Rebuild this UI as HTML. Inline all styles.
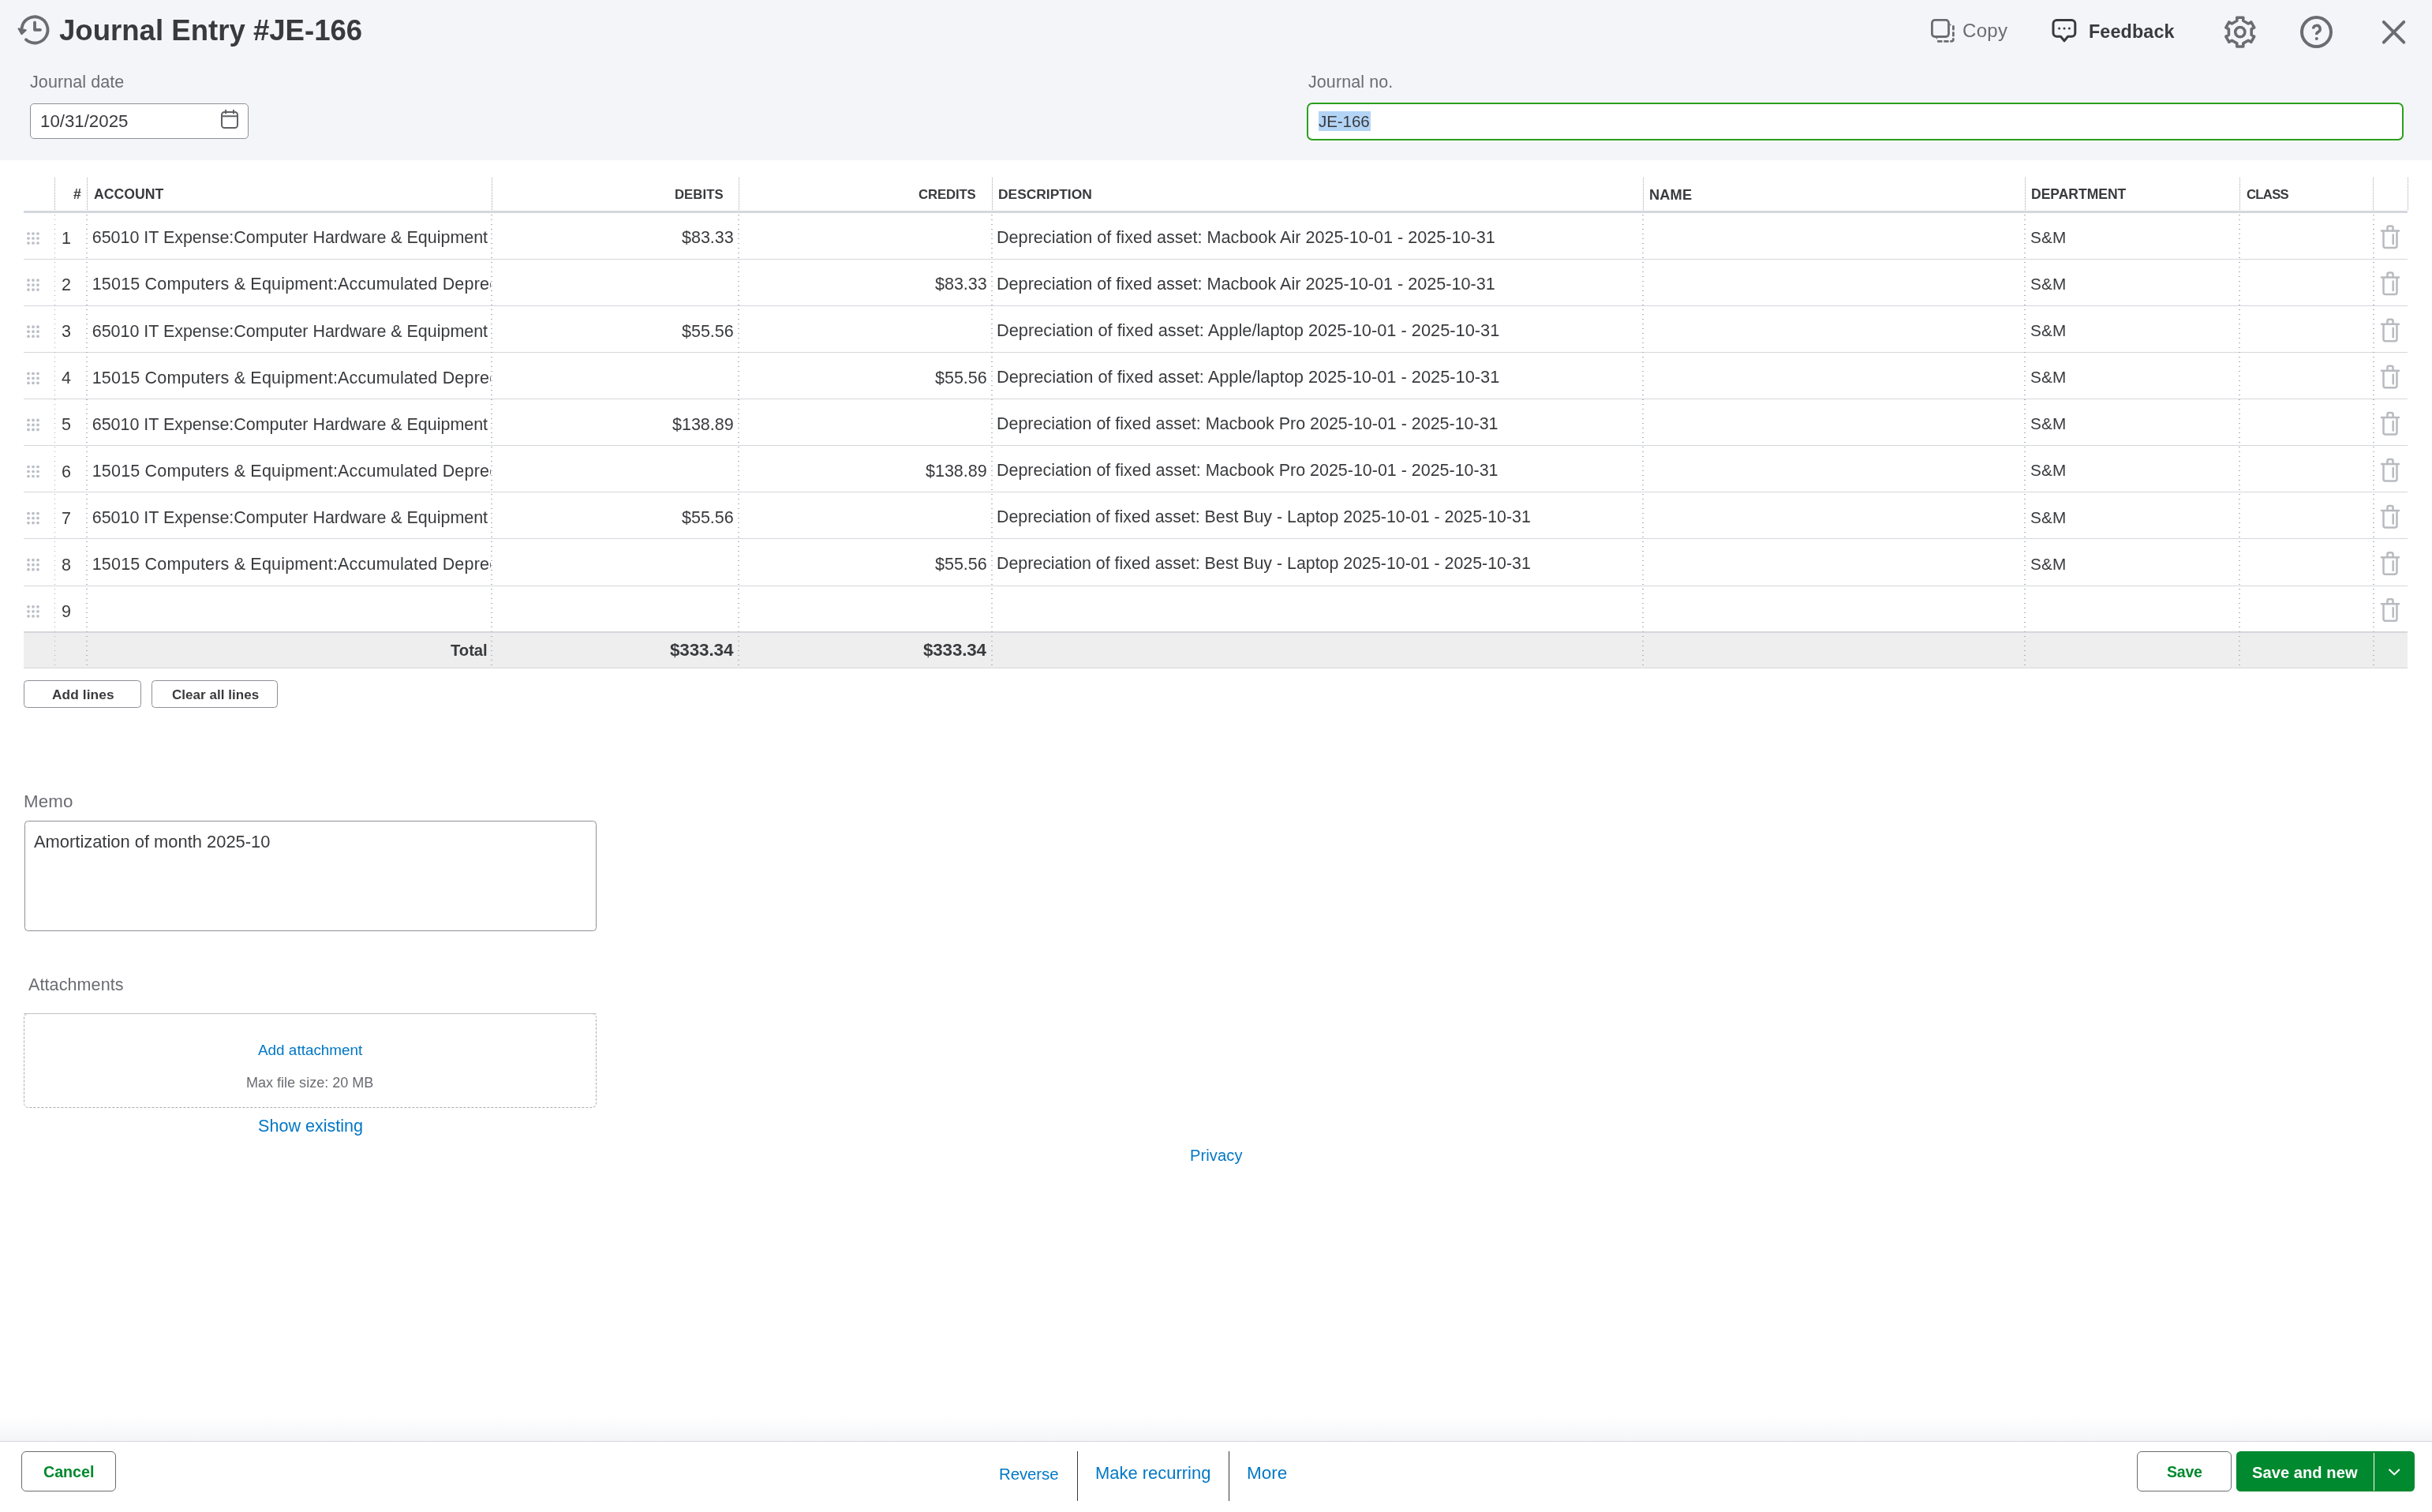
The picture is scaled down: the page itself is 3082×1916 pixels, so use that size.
<!DOCTYPE html>
<html><head><meta charset="utf-8"><title>Journal Entry</title>
<style>
html,body{margin:0;padding:0;}
body{width:3082px;height:1916px;position:relative;overflow:hidden;background:#fff;font-family:'Liberation Sans', sans-serif;}
.t{position:absolute;line-height:1;white-space:nowrap;will-change:transform;}
.b{position:absolute;}
svg.ov{position:absolute;left:0;top:0;}
</style></head><body>
<div class="b" style="left:0.00px;top:0.00px;width:3082.00px;height:202.50px;background:#f4f5f8;"></div>
<div class="t" style="left:75.10px;top:21.03px;font-size:36.59px;font-weight:bold;color:#393a3d;letter-spacing:-0.004px;">Journal Entry #JE-166</div>
<div class="t" style="left:2487.00px;top:27.24px;font-size:24.05px;font-weight:normal;color:#6b6c72;letter-spacing:0.296px;">Copy</div>
<div class="t" style="left:2646.50px;top:29.45px;font-size:23.33px;font-weight:bold;color:#393a3d;letter-spacing:0.122px;">Feedback</div>
<div class="t" style="left:38.40px;top:94.20px;font-size:21.5px;font-weight:normal;color:#6b6c72;letter-spacing:0.084px;">Journal date</div>
<div class="b" style="left:38.00px;top:131.00px;width:277.00px;height:45.00px;background:#fff;border:1.4px solid #8d9096;border-radius:5px;box-sizing:border-box;"></div>
<div class="t" style="left:51.00px;top:142.76px;font-size:22.26px;font-weight:normal;color:#393a3d;letter-spacing:0.002px;">10/31/2025</div>
<div class="t" style="left:1658.20px;top:94.23px;font-size:21.47px;font-weight:normal;color:#6b6c72;letter-spacing:0.094px;">Journal no.</div>
<div class="b" style="left:1656.40px;top:129.50px;width:1390.00px;height:48.00px;background:#fff;border:2.5px solid #2ca01c;border-radius:7px;box-sizing:border-box;"></div>
<div class="b" style="left:1671.00px;top:141.00px;width:66.00px;height:25.00px;background:#b3d4f5;"></div>
<div class="t" style="left:1671.00px;top:144.40px;font-size:20.55px;font-weight:normal;color:#393a3d;letter-spacing:-0.075px;">JE-166</div>
<div class="b" style="left:69.00px;top:225.00px;width:1.00px;height:42.00px;background:repeating-linear-gradient(to bottom,#a6a9ae 0 1px,transparent 1px 2px);"></div>
<div class="b" style="left:109.50px;top:225.00px;width:1.00px;height:42.00px;background:repeating-linear-gradient(to bottom,#a6a9ae 0 1px,transparent 1px 2px);"></div>
<div class="b" style="left:622.50px;top:225.00px;width:1.00px;height:42.00px;background:repeating-linear-gradient(to bottom,#a6a9ae 0 1px,transparent 1px 2px);"></div>
<div class="b" style="left:935.50px;top:225.00px;width:1.00px;height:42.00px;background:repeating-linear-gradient(to bottom,#a6a9ae 0 1px,transparent 1px 2px);"></div>
<div class="b" style="left:1256.50px;top:225.00px;width:1.00px;height:42.00px;background:repeating-linear-gradient(to bottom,#a6a9ae 0 1px,transparent 1px 2px);"></div>
<div class="b" style="left:2081.50px;top:225.00px;width:1.00px;height:42.00px;background:repeating-linear-gradient(to bottom,#a6a9ae 0 1px,transparent 1px 2px);"></div>
<div class="b" style="left:2565.50px;top:225.00px;width:1.00px;height:42.00px;background:repeating-linear-gradient(to bottom,#a6a9ae 0 1px,transparent 1px 2px);"></div>
<div class="b" style="left:2837.50px;top:225.00px;width:1.00px;height:42.00px;background:repeating-linear-gradient(to bottom,#a6a9ae 0 1px,transparent 1px 2px);"></div>
<div class="b" style="left:3007.00px;top:225.00px;width:1.00px;height:42.00px;background:repeating-linear-gradient(to bottom,#a6a9ae 0 1px,transparent 1px 2px);"></div>
<div class="b" style="left:3050.50px;top:225.00px;width:1.00px;height:42.00px;background:repeating-linear-gradient(to bottom,#a6a9ae 0 1px,transparent 1px 2px);"></div>
<div class="b" style="left:30.00px;top:267.00px;width:3021.00px;height:3.00px;background:#d4d7dc;"></div>
<div class="t" style="left:92.70px;top:238.10px;font-size:17.6px;font-weight:bold;color:#393a3d;letter-spacing:0.000px;">#</div>
<div class="t" style="left:118.90px;top:238.07px;font-size:17.64px;font-weight:bold;color:#393a3d;letter-spacing:0.008px;">ACCOUNT</div>
<div class="t" style="left:855.00px;top:238.85px;font-size:16.72px;font-weight:bold;color:#393a3d;letter-spacing:0.058px;">DEBITS</div>
<div class="t" style="left:1164.00px;top:238.85px;font-size:16.72px;font-weight:bold;color:#393a3d;letter-spacing:-0.112px;">CREDITS</div>
<div class="t" style="left:1265.00px;top:238.27px;font-size:17.4px;font-weight:bold;color:#393a3d;letter-spacing:-0.009px;">DESCRIPTION</div>
<div class="t" style="left:2090.00px;top:237.57px;font-size:18.23px;font-weight:bold;color:#393a3d;letter-spacing:0.137px;">NAME</div>
<div class="t" style="left:2573.60px;top:238.17px;font-size:17.52px;font-weight:bold;color:#393a3d;letter-spacing:-0.004px;">DEPARTMENT</div>
<div class="t" style="left:2846.80px;top:238.85px;font-size:16.72px;font-weight:bold;color:#393a3d;letter-spacing:-0.717px;">CLASS</div>
<div class="b" style="left:30.00px;top:327.80px;width:3021.00px;height:1.00px;background:#d4d7dc;"></div>
<div class="t" style="left:77.50px;top:292.00px;font-size:21.5px;font-weight:normal;color:#393a3d;">1</div>
<div class="t" style="left:117px;top:291.30px;width:505.00px;overflow:hidden;white-space:nowrap;font-size:21.5px;letter-spacing:-0.030px;color:#393a3d"><span style="margin-left:-0.30px">65010 IT Expense:Computer Hardware &amp; Equipment</span></div>
<div class="t" style="right:2152.00px;text-align:right;top:291.30px;font-size:21.5px;font-weight:normal;color:#393a3d;">$83.33</div>
<div class="t" style="left:1263.00px;top:290.22px;font-size:21.6px;font-weight:normal;color:#393a3d;letter-spacing:0.005px;">Depreciation of fixed asset: Macbook Air 2025-10-01 - 2025-10-31</div>
<div class="t" style="left:2573.00px;top:290.97px;font-size:20.71px;font-weight:normal;color:#393a3d;letter-spacing:0.191px;">S&amp;M</div>
<div class="b" style="left:30.00px;top:386.90px;width:3021.00px;height:1.00px;background:#d4d7dc;"></div>
<div class="t" style="left:77.50px;top:351.10px;font-size:21.5px;font-weight:normal;color:#393a3d;">2</div>
<div class="t" style="left:117px;top:350.40px;width:505.00px;overflow:hidden;white-space:nowrap;font-size:21.5px;letter-spacing:0.193px;color:#393a3d"><span style="margin-left:-0.30px">15015 Computers &amp; Equipment:Accumulated Depreciation</span></div>
<div class="t" style="right:1831.00px;text-align:right;top:350.40px;font-size:21.5px;font-weight:normal;color:#393a3d;">$83.33</div>
<div class="t" style="left:1263.00px;top:349.32px;font-size:21.6px;font-weight:normal;color:#393a3d;letter-spacing:0.005px;">Depreciation of fixed asset: Macbook Air 2025-10-01 - 2025-10-31</div>
<div class="t" style="left:2573.00px;top:350.07px;font-size:20.71px;font-weight:normal;color:#393a3d;letter-spacing:0.191px;">S&amp;M</div>
<div class="b" style="left:30.00px;top:446.00px;width:3021.00px;height:1.00px;background:#d4d7dc;"></div>
<div class="t" style="left:77.50px;top:410.20px;font-size:21.5px;font-weight:normal;color:#393a3d;">3</div>
<div class="t" style="left:117px;top:409.50px;width:505.00px;overflow:hidden;white-space:nowrap;font-size:21.5px;letter-spacing:-0.030px;color:#393a3d"><span style="margin-left:-0.30px">65010 IT Expense:Computer Hardware &amp; Equipment</span></div>
<div class="t" style="right:2152.00px;text-align:right;top:409.50px;font-size:21.5px;font-weight:normal;color:#393a3d;">$55.56</div>
<div class="t" style="left:1263.00px;top:408.23px;font-size:21.82px;font-weight:normal;color:#393a3d;letter-spacing:-0.009px;">Depreciation of fixed asset: Apple/laptop 2025-10-01 - 2025-10-31</div>
<div class="t" style="left:2573.00px;top:409.17px;font-size:20.71px;font-weight:normal;color:#393a3d;letter-spacing:0.191px;">S&amp;M</div>
<div class="b" style="left:30.00px;top:505.10px;width:3021.00px;height:1.00px;background:#d4d7dc;"></div>
<div class="t" style="left:77.50px;top:469.30px;font-size:21.5px;font-weight:normal;color:#393a3d;">4</div>
<div class="t" style="left:117px;top:468.60px;width:505.00px;overflow:hidden;white-space:nowrap;font-size:21.5px;letter-spacing:0.193px;color:#393a3d"><span style="margin-left:-0.30px">15015 Computers &amp; Equipment:Accumulated Depreciation</span></div>
<div class="t" style="right:1831.00px;text-align:right;top:468.60px;font-size:21.5px;font-weight:normal;color:#393a3d;">$55.56</div>
<div class="t" style="left:1263.00px;top:467.33px;font-size:21.82px;font-weight:normal;color:#393a3d;letter-spacing:-0.009px;">Depreciation of fixed asset: Apple/laptop 2025-10-01 - 2025-10-31</div>
<div class="t" style="left:2573.00px;top:468.27px;font-size:20.71px;font-weight:normal;color:#393a3d;letter-spacing:0.191px;">S&amp;M</div>
<div class="b" style="left:30.00px;top:564.20px;width:3021.00px;height:1.00px;background:#d4d7dc;"></div>
<div class="t" style="left:77.50px;top:528.40px;font-size:21.5px;font-weight:normal;color:#393a3d;">5</div>
<div class="t" style="left:117px;top:527.70px;width:505.00px;overflow:hidden;white-space:nowrap;font-size:21.5px;letter-spacing:-0.030px;color:#393a3d"><span style="margin-left:-0.30px">65010 IT Expense:Computer Hardware &amp; Equipment</span></div>
<div class="t" style="right:2152.00px;text-align:right;top:527.70px;font-size:21.5px;font-weight:normal;color:#393a3d;">$138.89</div>
<div class="t" style="left:1263.00px;top:526.74px;font-size:21.45px;font-weight:normal;color:#393a3d;letter-spacing:0.006px;">Depreciation of fixed asset: Macbook Pro 2025-10-01 - 2025-10-31</div>
<div class="t" style="left:2573.00px;top:527.37px;font-size:20.71px;font-weight:normal;color:#393a3d;letter-spacing:0.191px;">S&amp;M</div>
<div class="b" style="left:30.00px;top:623.30px;width:3021.00px;height:1.00px;background:#d4d7dc;"></div>
<div class="t" style="left:77.50px;top:587.50px;font-size:21.5px;font-weight:normal;color:#393a3d;">6</div>
<div class="t" style="left:117px;top:586.80px;width:505.00px;overflow:hidden;white-space:nowrap;font-size:21.5px;letter-spacing:0.193px;color:#393a3d"><span style="margin-left:-0.30px">15015 Computers &amp; Equipment:Accumulated Depreciation</span></div>
<div class="t" style="right:1831.00px;text-align:right;top:586.80px;font-size:21.5px;font-weight:normal;color:#393a3d;">$138.89</div>
<div class="t" style="left:1263.00px;top:585.84px;font-size:21.45px;font-weight:normal;color:#393a3d;letter-spacing:0.006px;">Depreciation of fixed asset: Macbook Pro 2025-10-01 - 2025-10-31</div>
<div class="t" style="left:2573.00px;top:586.47px;font-size:20.71px;font-weight:normal;color:#393a3d;letter-spacing:0.191px;">S&amp;M</div>
<div class="b" style="left:30.00px;top:682.40px;width:3021.00px;height:1.00px;background:#d4d7dc;"></div>
<div class="t" style="left:77.50px;top:646.60px;font-size:21.5px;font-weight:normal;color:#393a3d;">7</div>
<div class="t" style="left:117px;top:645.90px;width:505.00px;overflow:hidden;white-space:nowrap;font-size:21.5px;letter-spacing:-0.030px;color:#393a3d"><span style="margin-left:-0.30px">65010 IT Expense:Computer Hardware &amp; Equipment</span></div>
<div class="t" style="right:2152.00px;text-align:right;top:645.90px;font-size:21.5px;font-weight:normal;color:#393a3d;">$55.56</div>
<div class="t" style="left:1263.00px;top:645.02px;font-size:21.36px;font-weight:normal;color:#393a3d;letter-spacing:-0.000px;">Depreciation of fixed asset: Best Buy - Laptop 2025-10-01 - 2025-10-31</div>
<div class="t" style="left:2573.00px;top:645.57px;font-size:20.71px;font-weight:normal;color:#393a3d;letter-spacing:0.191px;">S&amp;M</div>
<div class="b" style="left:30.00px;top:741.50px;width:3021.00px;height:1.00px;background:#d4d7dc;"></div>
<div class="t" style="left:77.50px;top:705.70px;font-size:21.5px;font-weight:normal;color:#393a3d;">8</div>
<div class="t" style="left:117px;top:705.00px;width:505.00px;overflow:hidden;white-space:nowrap;font-size:21.5px;letter-spacing:0.193px;color:#393a3d"><span style="margin-left:-0.30px">15015 Computers &amp; Equipment:Accumulated Depreciation</span></div>
<div class="t" style="right:1831.00px;text-align:right;top:705.00px;font-size:21.5px;font-weight:normal;color:#393a3d;">$55.56</div>
<div class="t" style="left:1263.00px;top:704.12px;font-size:21.36px;font-weight:normal;color:#393a3d;letter-spacing:-0.000px;">Depreciation of fixed asset: Best Buy - Laptop 2025-10-01 - 2025-10-31</div>
<div class="t" style="left:2573.00px;top:704.67px;font-size:20.71px;font-weight:normal;color:#393a3d;letter-spacing:0.191px;">S&amp;M</div>
<div class="t" style="left:77.50px;top:764.80px;font-size:21.5px;font-weight:normal;color:#393a3d;">9</div>
<div class="b" style="left:30.00px;top:800.00px;width:3021.00px;height:2.00px;background:#d4d7dc;"></div>
<div class="b" style="left:30.00px;top:802.00px;width:3021.00px;height:44.00px;background:#eeeeee;"></div>
<div class="b" style="left:30.00px;top:846.00px;width:3021.00px;height:1.00px;background:#d4d7dc;"></div>
<div class="t" style="left:570.70px;top:814.42px;font-size:20.3px;font-weight:bold;color:#393a3d;letter-spacing:-0.051px;">Total</div>
<div class="t" style="left:849.00px;top:812.60px;font-size:22.45px;font-weight:bold;color:#393a3d;letter-spacing:-0.105px;">$333.34</div>
<div class="t" style="left:1170.00px;top:812.69px;font-size:22.34px;font-weight:bold;color:#393a3d;letter-spacing:-0.115px;">$333.34</div>
<div class="b" style="left:69.00px;top:272.00px;width:1.00px;height:574.00px;background:repeating-linear-gradient(to bottom,#a9acb1 0 1px,transparent 1px 6px);"></div>
<div class="b" style="left:109.00px;top:272.00px;width:2.00px;height:574.00px;background:repeating-linear-gradient(to bottom,#b0b3b8 0 1px,transparent 1px 6px);"></div>
<div class="b" style="left:622.00px;top:272.00px;width:2.00px;height:574.00px;background:repeating-linear-gradient(to bottom,#b0b3b8 0 1px,transparent 1px 6px);"></div>
<div class="b" style="left:935.00px;top:272.00px;width:2.00px;height:574.00px;background:repeating-linear-gradient(to bottom,#b0b3b8 0 1px,transparent 1px 6px);"></div>
<div class="b" style="left:1256.00px;top:272.00px;width:2.00px;height:574.00px;background:repeating-linear-gradient(to bottom,#b0b3b8 0 1px,transparent 1px 6px);"></div>
<div class="b" style="left:2081.00px;top:272.00px;width:2.00px;height:574.00px;background:repeating-linear-gradient(to bottom,#b0b3b8 0 1px,transparent 1px 6px);"></div>
<div class="b" style="left:2565.00px;top:272.00px;width:2.00px;height:574.00px;background:repeating-linear-gradient(to bottom,#b0b3b8 0 1px,transparent 1px 6px);"></div>
<div class="b" style="left:2837.00px;top:272.00px;width:2.00px;height:574.00px;background:repeating-linear-gradient(to bottom,#b0b3b8 0 1px,transparent 1px 6px);"></div>
<div class="b" style="left:3007.00px;top:272.00px;width:2.00px;height:574.00px;background:repeating-linear-gradient(to bottom,#b0b3b8 0 1px,transparent 1px 6px);"></div>
<div class="b" style="left:30.30px;top:862.30px;width:149.10px;height:35.20px;border:1.3px solid #8d9096;border-radius:4.5px;box-sizing:border-box;"></div>
<div class="t" style="left:66.00px;top:872.00px;font-size:17.25px;font-weight:bold;color:#393a3d;letter-spacing:0.108px;">Add lines</div>
<div class="b" style="left:192.30px;top:862.30px;width:160.20px;height:35.20px;border:1.3px solid #8d9096;border-radius:4.5px;box-sizing:border-box;"></div>
<div class="t" style="left:217.70px;top:872.22px;font-size:16.99px;font-weight:bold;color:#393a3d;letter-spacing:0.052px;">Clear all lines</div>
<div class="t" style="left:29.50px;top:1005.39px;font-size:22.34px;font-weight:normal;color:#6b6c72;letter-spacing:0.094px;">Memo</div>
<div class="b" style="left:30.50px;top:1040.40px;width:725.50px;height:140.10px;border:1.4px solid #8d9096;border-radius:4.5px;box-sizing:border-box;background:#fff;"></div>
<div class="t" style="left:43.30px;top:1056.06px;font-size:21.9px;font-weight:normal;color:#393a3d;letter-spacing:0.001px;">Amortization of month 2025-10</div>
<div class="t" style="left:36.20px;top:1237.67px;font-size:21.54px;font-weight:normal;color:#6b6c72;letter-spacing:0.089px;">Attachments</div>
<div class="b" style="left:29.90px;top:1284.40px;width:726.10px;height:120.00px;border:1.2px dashed #a9acb1;border-radius:6px;box-sizing:border-box;"></div>
<div class="b" style="left:29.90px;top:1284.00px;width:726.10px;height:1.20px;background:#bfc2c7;"></div>
<div class="t" style="left:326.50px;top:1322.30px;font-size:18.9px;font-weight:normal;color:#0077c5;letter-spacing:0.002px;">Add attachment</div>
<div class="t" style="left:311.70px;top:1363.10px;font-size:18.07px;font-weight:normal;color:#6b6c72;letter-spacing:-0.014px;">Max file size: 20 MB</div>
<div class="t" style="left:326.50px;top:1415.64px;font-size:21.57px;font-weight:normal;color:#0077c5;letter-spacing:0.004px;">Show existing</div>
<div class="t" style="left:1507.80px;top:1454.31px;font-size:20.07px;font-weight:normal;color:#0077c5;letter-spacing:0.110px;">Privacy</div>
<div class="b" style="left:0.00px;top:1794.00px;width:3082.00px;height:32.00px;background:linear-gradient(to bottom,rgba(244,245,248,0),rgba(244,245,248,1));"></div>
<div class="b" style="left:0.00px;top:1826.00px;width:3082.00px;height:1.00px;background:#d4d7dc;"></div>
<div class="b" style="left:0.00px;top:1827.00px;width:3082.00px;height:89.00px;background:#fff;"></div>
<div class="b" style="left:27.30px;top:1839.00px;width:119.40px;height:50.60px;border:1.5px solid #6b6c72;border-radius:6px;box-sizing:border-box;background:#fff;"></div>
<div class="t" style="left:54.80px;top:1855.91px;font-size:19.72px;font-weight:bold;color:#00892e;letter-spacing:-0.038px;">Cancel</div>
<div class="t" style="left:1265.80px;top:1857.51px;font-size:20.42px;font-weight:normal;color:#0077c5;letter-spacing:-0.073px;">Reverse</div>
<div class="b" style="left:1365.00px;top:1839.00px;width:1.30px;height:63.00px;background:#393a3d;"></div>
<div class="t" style="left:1388.40px;top:1856.24px;font-size:21.92px;font-weight:normal;color:#0077c5;letter-spacing:0.022px;">Make recurring</div>
<div class="b" style="left:1556.80px;top:1839.00px;width:1.30px;height:63.00px;background:#393a3d;"></div>
<div class="t" style="left:1580.00px;top:1855.78px;font-size:22.47px;font-weight:normal;color:#0077c5;letter-spacing:0.002px;">More</div>
<div class="b" style="left:2708.00px;top:1839.00px;width:119.60px;height:50.80px;border:1.5px solid #6b6c72;border-radius:6px;box-sizing:border-box;background:#fff;"></div>
<div class="t" style="left:2745.60px;top:1856.03px;font-size:19.57px;font-weight:bold;color:#00892e;letter-spacing:-0.236px;">Save</div>
<div class="b" style="left:2833.70px;top:1839.00px;width:226.10px;height:50.80px;background:#00892e;border-radius:5.5px;"></div>
<div class="b" style="left:3007.80px;top:1841.00px;width:1.20px;height:47.60px;background:#fff;"></div>
<div class="t" style="left:2854.40px;top:1855.58px;font-size:20.11px;font-weight:bold;color:#fff;letter-spacing:0.049px;">Save and new</div>
<svg class="ov" width="3082" height="1916" viewBox="0 0 3082 1916">
<g stroke="#6b6c72" stroke-width="3.8" fill="none" stroke-linecap="round" stroke-linejoin="round"><path d="M32.9 50.2 A16.55 16.55 0 1 0 27.6 35.5"/><path d="M44 28.5 V37.8 H51"/></g><path d="M23.5 36.3 L32.8 38.3 L27.4 43.2 Z" fill="#6b6c72" stroke="#6b6c72" stroke-width="2" stroke-linejoin="round"/>
<g stroke="#6b6c72" stroke-width="2.8" fill="none" stroke-linecap="round"><path d="M2475.4 33.5 V37.2 M2475.4 41.5 V45.2 M2475.4 49.5 Q2475.4 52.4 2472.5 52.4 M2468.4 52.4 H2464.5 M2460.3 52.4 H2456.2"/></g><path d="M2470.9 30 L2472.9 31.4 L2471.4 32.8 Z M2452.9 46.6 L2455.8 47.6 L2454.2 49.9 Z" fill="#6b6c72"/><rect x="2448.4" y="25.4" width="21.1" height="21.1" rx="3.7" stroke="#6b6c72" stroke-width="2.8" fill="#f4f5f8"/>
<path d="M2606.5 25.4 H2625.3 A4.5 4.5 0 0 1 2629.8 29.9 V41.8 A4.5 4.5 0 0 1 2625.3 46.3 H2620.5 L2616 51.8 L2611.5 46.3 H2606.5 A4.5 4.5 0 0 1 2602 41.8 V29.9 A4.5 4.5 0 0 1 2606.5 25.4 Z" stroke="#393a3d" stroke-width="3" fill="none" stroke-linejoin="round"/><g fill="#393a3d"><circle cx="2609.6" cy="35.9" r="1.5"/><circle cx="2616" cy="35.9" r="1.5"/><circle cx="2622.4" cy="35.9" r="1.5"/></g>
<path d="M2834.80 26.30 L2834.80 22.20 L2842.80 22.20 L2842.80 26.30 L2849.18 29.99 L2852.73 27.94 L2856.73 34.86 L2853.18 36.91 L2853.18 44.29 L2856.73 46.34 L2852.73 53.26 L2849.18 51.21 L2842.80 54.90 L2842.80 59.00 L2834.80 59.00 L2834.80 54.90 L2828.42 51.21 L2824.87 53.26 L2820.87 46.34 L2824.42 44.29 L2824.42 36.91 L2820.87 34.86 L2824.87 27.94 L2828.42 29.99 Z" stroke="#6b6c72" stroke-width="3.6" fill="none" stroke-linejoin="round"/><circle cx="2838.8" cy="40.6" r="6.1" stroke="#6b6c72" stroke-width="3.6" fill="none"/>
<circle cx="2935.5" cy="40.6" r="18.5" stroke="#6b6c72" stroke-width="4" fill="none"/><path d="M2931.6 36.6 A4.3 4.3 0 1 1 2937.6 40.6 Q2935.7 41.6 2935.7 44" stroke="#6b6c72" stroke-width="3.5" fill="none" stroke-linecap="butt" stroke-linejoin="round"/><circle cx="2935.8" cy="48.9" r="2.0" fill="#6b6c72"/>
<path d="M3020.8 27.8 L3046.3 53.6 M3046.3 27.8 L3020.8 53.6" stroke="#6b6c72" stroke-width="3.9" stroke-linecap="round"/>
<g stroke="#5f6065" stroke-width="2" fill="none" stroke-linecap="round"><rect x="281" y="142" width="20" height="20" rx="3.5"/><path d="M281 147.3 H301 M286 139.8 V143.5 M296 139.8 V143.5"/></g>
<circle cx="36" cy="296.00" r="1.85" fill="#babec5"/>
<circle cx="36" cy="302.00" r="1.85" fill="#babec5"/>
<circle cx="36" cy="308.00" r="1.85" fill="#babec5"/>
<circle cx="42" cy="296.00" r="1.85" fill="#babec5"/>
<circle cx="42" cy="302.00" r="1.85" fill="#babec5"/>
<circle cx="42" cy="308.00" r="1.85" fill="#babec5"/>
<circle cx="48" cy="296.00" r="1.85" fill="#babec5"/>
<circle cx="48" cy="302.00" r="1.85" fill="#babec5"/>
<circle cx="48" cy="308.00" r="1.85" fill="#babec5"/>
<g stroke="#b8bbc0" stroke-width="2.5" fill="none" stroke-linecap="round" stroke-linejoin="round"><path d="M3018 292.50 H3040"/><path d="M3025.5 292.50 V288.50 A2 2 0 0 1 3027.5 286.50 H3030.5 A2 2 0 0 1 3032.5 288.50 V292.50"/><path d="M3020.5 293.00 V311.50 A2.5 2.5 0 0 0 3023 314.00 H3035 A2.5 2.5 0 0 0 3037.5 311.50 V293.00"/><path d="M3032.7 297.50 V309.00"/></g>
<circle cx="36" cy="355.10" r="1.85" fill="#babec5"/>
<circle cx="36" cy="361.10" r="1.85" fill="#babec5"/>
<circle cx="36" cy="367.10" r="1.85" fill="#babec5"/>
<circle cx="42" cy="355.10" r="1.85" fill="#babec5"/>
<circle cx="42" cy="361.10" r="1.85" fill="#babec5"/>
<circle cx="42" cy="367.10" r="1.85" fill="#babec5"/>
<circle cx="48" cy="355.10" r="1.85" fill="#babec5"/>
<circle cx="48" cy="361.10" r="1.85" fill="#babec5"/>
<circle cx="48" cy="367.10" r="1.85" fill="#babec5"/>
<g stroke="#b8bbc0" stroke-width="2.5" fill="none" stroke-linecap="round" stroke-linejoin="round"><path d="M3018 351.60 H3040"/><path d="M3025.5 351.60 V347.60 A2 2 0 0 1 3027.5 345.60 H3030.5 A2 2 0 0 1 3032.5 347.60 V351.60"/><path d="M3020.5 352.10 V370.60 A2.5 2.5 0 0 0 3023 373.10 H3035 A2.5 2.5 0 0 0 3037.5 370.60 V352.10"/><path d="M3032.7 356.60 V368.10"/></g>
<circle cx="36" cy="414.20" r="1.85" fill="#babec5"/>
<circle cx="36" cy="420.20" r="1.85" fill="#babec5"/>
<circle cx="36" cy="426.20" r="1.85" fill="#babec5"/>
<circle cx="42" cy="414.20" r="1.85" fill="#babec5"/>
<circle cx="42" cy="420.20" r="1.85" fill="#babec5"/>
<circle cx="42" cy="426.20" r="1.85" fill="#babec5"/>
<circle cx="48" cy="414.20" r="1.85" fill="#babec5"/>
<circle cx="48" cy="420.20" r="1.85" fill="#babec5"/>
<circle cx="48" cy="426.20" r="1.85" fill="#babec5"/>
<g stroke="#b8bbc0" stroke-width="2.5" fill="none" stroke-linecap="round" stroke-linejoin="round"><path d="M3018 410.70 H3040"/><path d="M3025.5 410.70 V406.70 A2 2 0 0 1 3027.5 404.70 H3030.5 A2 2 0 0 1 3032.5 406.70 V410.70"/><path d="M3020.5 411.20 V429.70 A2.5 2.5 0 0 0 3023 432.20 H3035 A2.5 2.5 0 0 0 3037.5 429.70 V411.20"/><path d="M3032.7 415.70 V427.20"/></g>
<circle cx="36" cy="473.30" r="1.85" fill="#babec5"/>
<circle cx="36" cy="479.30" r="1.85" fill="#babec5"/>
<circle cx="36" cy="485.30" r="1.85" fill="#babec5"/>
<circle cx="42" cy="473.30" r="1.85" fill="#babec5"/>
<circle cx="42" cy="479.30" r="1.85" fill="#babec5"/>
<circle cx="42" cy="485.30" r="1.85" fill="#babec5"/>
<circle cx="48" cy="473.30" r="1.85" fill="#babec5"/>
<circle cx="48" cy="479.30" r="1.85" fill="#babec5"/>
<circle cx="48" cy="485.30" r="1.85" fill="#babec5"/>
<g stroke="#b8bbc0" stroke-width="2.5" fill="none" stroke-linecap="round" stroke-linejoin="round"><path d="M3018 469.80 H3040"/><path d="M3025.5 469.80 V465.80 A2 2 0 0 1 3027.5 463.80 H3030.5 A2 2 0 0 1 3032.5 465.80 V469.80"/><path d="M3020.5 470.30 V488.80 A2.5 2.5 0 0 0 3023 491.30 H3035 A2.5 2.5 0 0 0 3037.5 488.80 V470.30"/><path d="M3032.7 474.80 V486.30"/></g>
<circle cx="36" cy="532.40" r="1.85" fill="#babec5"/>
<circle cx="36" cy="538.40" r="1.85" fill="#babec5"/>
<circle cx="36" cy="544.40" r="1.85" fill="#babec5"/>
<circle cx="42" cy="532.40" r="1.85" fill="#babec5"/>
<circle cx="42" cy="538.40" r="1.85" fill="#babec5"/>
<circle cx="42" cy="544.40" r="1.85" fill="#babec5"/>
<circle cx="48" cy="532.40" r="1.85" fill="#babec5"/>
<circle cx="48" cy="538.40" r="1.85" fill="#babec5"/>
<circle cx="48" cy="544.40" r="1.85" fill="#babec5"/>
<g stroke="#b8bbc0" stroke-width="2.5" fill="none" stroke-linecap="round" stroke-linejoin="round"><path d="M3018 528.90 H3040"/><path d="M3025.5 528.90 V524.90 A2 2 0 0 1 3027.5 522.90 H3030.5 A2 2 0 0 1 3032.5 524.90 V528.90"/><path d="M3020.5 529.40 V547.90 A2.5 2.5 0 0 0 3023 550.40 H3035 A2.5 2.5 0 0 0 3037.5 547.90 V529.40"/><path d="M3032.7 533.90 V545.40"/></g>
<circle cx="36" cy="591.50" r="1.85" fill="#babec5"/>
<circle cx="36" cy="597.50" r="1.85" fill="#babec5"/>
<circle cx="36" cy="603.50" r="1.85" fill="#babec5"/>
<circle cx="42" cy="591.50" r="1.85" fill="#babec5"/>
<circle cx="42" cy="597.50" r="1.85" fill="#babec5"/>
<circle cx="42" cy="603.50" r="1.85" fill="#babec5"/>
<circle cx="48" cy="591.50" r="1.85" fill="#babec5"/>
<circle cx="48" cy="597.50" r="1.85" fill="#babec5"/>
<circle cx="48" cy="603.50" r="1.85" fill="#babec5"/>
<g stroke="#b8bbc0" stroke-width="2.5" fill="none" stroke-linecap="round" stroke-linejoin="round"><path d="M3018 588.00 H3040"/><path d="M3025.5 588.00 V584.00 A2 2 0 0 1 3027.5 582.00 H3030.5 A2 2 0 0 1 3032.5 584.00 V588.00"/><path d="M3020.5 588.50 V607.00 A2.5 2.5 0 0 0 3023 609.50 H3035 A2.5 2.5 0 0 0 3037.5 607.00 V588.50"/><path d="M3032.7 593.00 V604.50"/></g>
<circle cx="36" cy="650.60" r="1.85" fill="#babec5"/>
<circle cx="36" cy="656.60" r="1.85" fill="#babec5"/>
<circle cx="36" cy="662.60" r="1.85" fill="#babec5"/>
<circle cx="42" cy="650.60" r="1.85" fill="#babec5"/>
<circle cx="42" cy="656.60" r="1.85" fill="#babec5"/>
<circle cx="42" cy="662.60" r="1.85" fill="#babec5"/>
<circle cx="48" cy="650.60" r="1.85" fill="#babec5"/>
<circle cx="48" cy="656.60" r="1.85" fill="#babec5"/>
<circle cx="48" cy="662.60" r="1.85" fill="#babec5"/>
<g stroke="#b8bbc0" stroke-width="2.5" fill="none" stroke-linecap="round" stroke-linejoin="round"><path d="M3018 647.10 H3040"/><path d="M3025.5 647.10 V643.10 A2 2 0 0 1 3027.5 641.10 H3030.5 A2 2 0 0 1 3032.5 643.10 V647.10"/><path d="M3020.5 647.60 V666.10 A2.5 2.5 0 0 0 3023 668.60 H3035 A2.5 2.5 0 0 0 3037.5 666.10 V647.60"/><path d="M3032.7 652.10 V663.60"/></g>
<circle cx="36" cy="709.70" r="1.85" fill="#babec5"/>
<circle cx="36" cy="715.70" r="1.85" fill="#babec5"/>
<circle cx="36" cy="721.70" r="1.85" fill="#babec5"/>
<circle cx="42" cy="709.70" r="1.85" fill="#babec5"/>
<circle cx="42" cy="715.70" r="1.85" fill="#babec5"/>
<circle cx="42" cy="721.70" r="1.85" fill="#babec5"/>
<circle cx="48" cy="709.70" r="1.85" fill="#babec5"/>
<circle cx="48" cy="715.70" r="1.85" fill="#babec5"/>
<circle cx="48" cy="721.70" r="1.85" fill="#babec5"/>
<g stroke="#b8bbc0" stroke-width="2.5" fill="none" stroke-linecap="round" stroke-linejoin="round"><path d="M3018 706.20 H3040"/><path d="M3025.5 706.20 V702.20 A2 2 0 0 1 3027.5 700.20 H3030.5 A2 2 0 0 1 3032.5 702.20 V706.20"/><path d="M3020.5 706.70 V725.20 A2.5 2.5 0 0 0 3023 727.70 H3035 A2.5 2.5 0 0 0 3037.5 725.20 V706.70"/><path d="M3032.7 711.20 V722.70"/></g>
<circle cx="36" cy="768.80" r="1.85" fill="#babec5"/>
<circle cx="36" cy="774.80" r="1.85" fill="#babec5"/>
<circle cx="36" cy="780.80" r="1.85" fill="#babec5"/>
<circle cx="42" cy="768.80" r="1.85" fill="#babec5"/>
<circle cx="42" cy="774.80" r="1.85" fill="#babec5"/>
<circle cx="42" cy="780.80" r="1.85" fill="#babec5"/>
<circle cx="48" cy="768.80" r="1.85" fill="#babec5"/>
<circle cx="48" cy="774.80" r="1.85" fill="#babec5"/>
<circle cx="48" cy="780.80" r="1.85" fill="#babec5"/>
<g stroke="#b8bbc0" stroke-width="2.5" fill="none" stroke-linecap="round" stroke-linejoin="round"><path d="M3018 765.30 H3040"/><path d="M3025.5 765.30 V761.30 A2 2 0 0 1 3027.5 759.30 H3030.5 A2 2 0 0 1 3032.5 761.30 V765.30"/><path d="M3020.5 765.80 V784.30 A2.5 2.5 0 0 0 3023 786.80 H3035 A2.5 2.5 0 0 0 3037.5 784.30 V765.80"/><path d="M3032.7 770.30 V781.80"/></g>
<path d="M3027.6 1862 L3034.2 1868.4 L3040.8 1862" stroke="#fff" stroke-width="2.1" fill="none" stroke-linecap="butt" stroke-linejoin="miter"/>
</svg>
</body></html>
